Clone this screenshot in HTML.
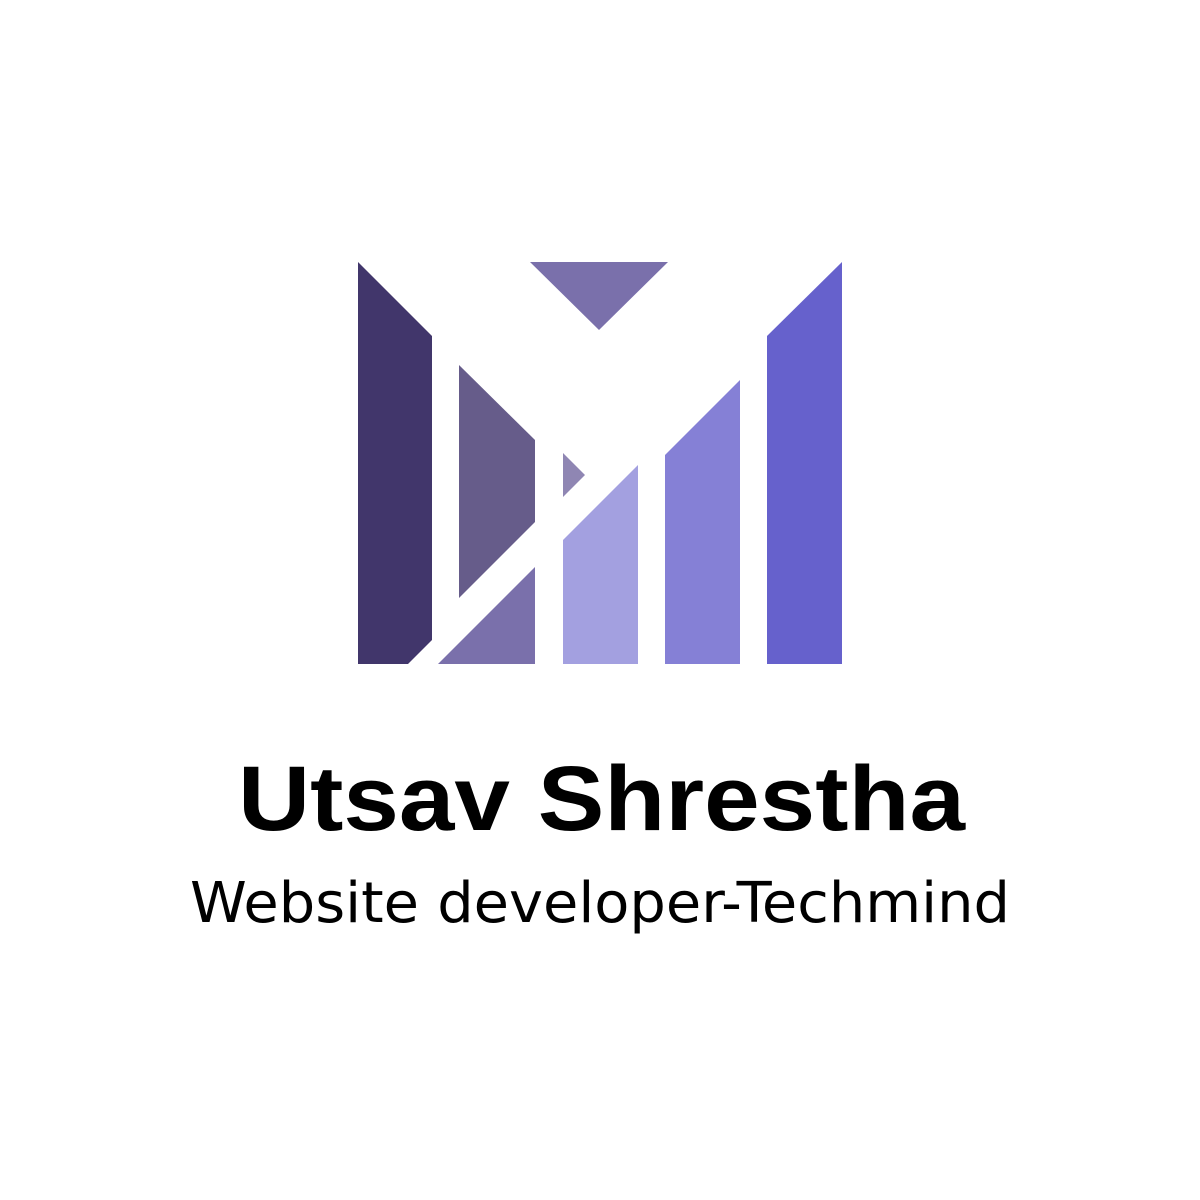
<!DOCTYPE html>
<html><head><meta charset="utf-8"><style>html,body{margin:0;padding:0;background:#fff;}svg{display:block}</style></head>
<body>
<svg width="1200" height="1200" viewBox="0 0 1200 1200" xmlns="http://www.w3.org/2000/svg">
<rect width="1200" height="1200" fill="#fff"/>
<polygon points="358,262 432,336 432,640 408,664 358,664" fill="#41366b"/>
<polygon points="459,365 535,440 535,522 459,598" fill="#665c8a"/>
<polygon points="438,664 535,567 535,664" fill="#7a70ab"/>
<polygon points="563,453 585,475 563,497" fill="#8f86b3"/>
<polygon points="530,262 668,262 599,330" fill="#7a70ab"/>
<polygon points="563,540 638,465 638,664 563,664" fill="#a3a0e0"/>
<polygon points="665,455 740,380 740,664 665,664" fill="#8580d6"/>
<polygon points="767,336 842,262 842,664 767,664" fill="#6661cc"/>
<text x="238" y="830" font-family="Liberation Sans, sans-serif" font-weight="bold" font-size="92" textLength="727" lengthAdjust="spacingAndGlyphs" fill="#000">Utsav Shrestha</text>
<text x="190" y="922" font-family="DejaVu Sans, sans-serif" font-weight="normal" font-size="56" textLength="820" lengthAdjust="spacingAndGlyphs" fill="#000">Website developer-Techmind</text>
</svg>
</body></html>
